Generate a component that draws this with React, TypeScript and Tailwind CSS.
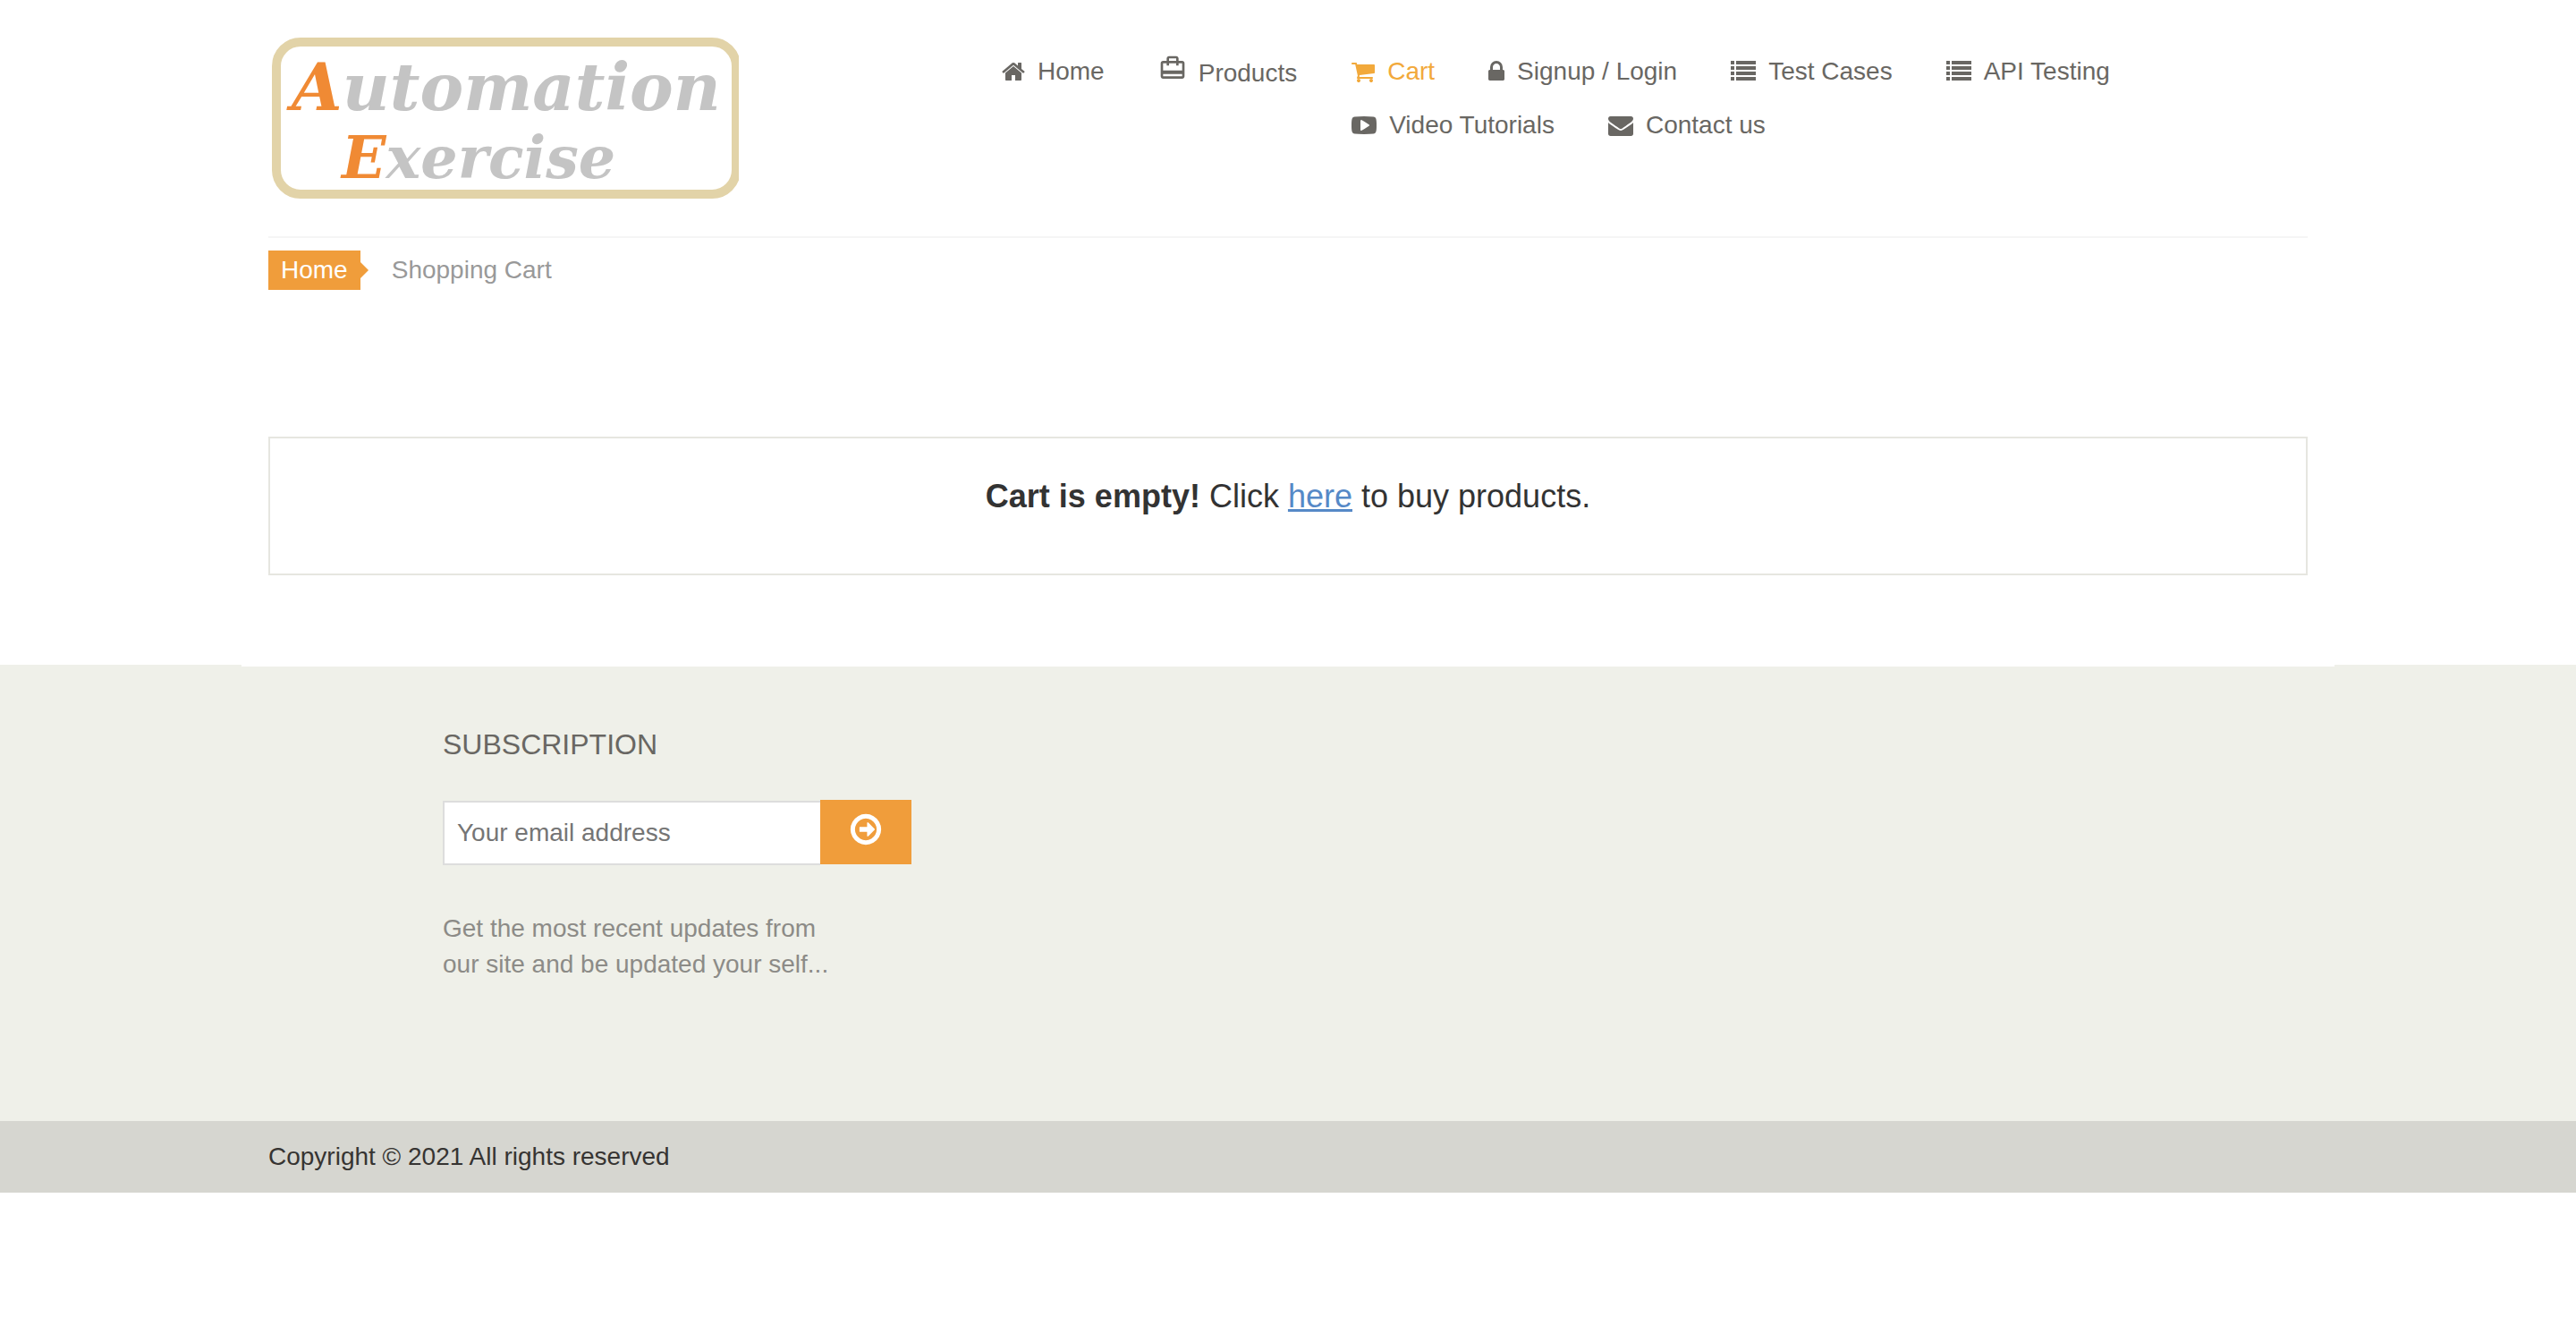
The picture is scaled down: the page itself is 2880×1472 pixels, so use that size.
import type { ReactNode } from "react";

function FaIcon({ d, left = 0, width = 1792, className }: { d: string; left?: number; width?: number; className: string }) {
  return (
    <svg viewBox={`${left} 0 ${width} 1792`} fill="currentColor" aria-hidden="true" className={className}>
      <path d={d} />
    </svg>
  );
}

const HOME =
  "M1472 992v480q0 26-19 45t-45 19h-384v-384h-256v384h-384q-26 0-45-19t-19-45v-480q0-1 .5-3t.5-3l575-474 575 474q1 2 1 6zm223-69l-62 74q-8 9-21 11h-3q-13 0-21-7l-692-577-692 577q-12 8-24 7-13-2-21-11l-62-74q-8-10-7-23.5t11-21.5l719-599q32-26 76-26t76 26l244 204v-195q0-14 9-23t23-9h192q14 0 23 9t9 23v408l219 182q10 8 11 21.5t-7 23.5z";
const CART =
  "M704 1536q0 52-38 90t-90 38-90-38-38-90 38-90 90-38 90 38 38 90zm896 0q0 52-38 90t-90 38-90-38-38-90 38-90 90-38 90 38 38 90zm128-1088v512q0 24-16.5 42.5t-40.5 21.5l-1044 122q13 60 13 70 0 16-24 64h920q26 0 45 19t19 45-19 45-45 19h-1024q-26 0-45-19t-19-45q0-11 8-31.5t16-36 21.5-40 15.5-29.5l-177-823h-204q-26 0-45-19t-19-45 19-45 45-19h256q16 0 28.5 6.5t19.5 15.5 13 24.5 8 26 5.5 29.5 4.5 26h1201q26 0 45 19t19 45z";
const LOCK =
  "M640 768h512v-192q0-106-75-181t-181-75-181 75-75 181v192zm832 96v576q0 40-28 68t-68 28h-960q-40 0-68-28t-28-68v-576q0-40 28-68t68-28h32v-192q0-184 132-316t316-132 316 132 132 316v192h32q40 0 68 28t28 68z";
const LIST =
  "M0 128h256v256H0zM384 128h1408v256H384zM0 512h256v256H0zM384 512h1408v256H384zM0 896h256v256H0zM384 896h1408v256H384zM0 1280h256v256H0zM384 1280h1408v256H384z";
const PLAY =
  "M1280 896q0-37-30-54l-512-320q-31-20-65-2-33 18-33 56v640q0 38 33 56 16 8 31 8 20 0 34-10l512-320q30-17 30-54zm512 0q0 96-1 150t-8.5 136.5-22.5 147.5q-16 73-69 123t-124 58q-222 25-671 25t-671-25q-71-8-124.5-58t-69.5-123q-14-65-21.5-147.5t-8.5-136.5-1-150 1-150 8.5-136.5 22.5-147.5q16-73 69-123t124-58q222-25 671-25t671 25q71 8 124.5 58t69.5 123q14 65 21.5 147.5t8.5 136.5 1 150z";
const ENVELOPE =
  "M1792 710v794q0 66-47 113t-113 47h-1472q-66 0-113-47t-47-113v-794q44 49 101 87 362 246 497 345 57 42 92.5 65.5t94.5 48 110 24.5h2q51 0 110-24.5t94.5-48 92.5-65.5q170-123 498-345 57-39 100-87zm0-294q0 79-49 151t-122 123q-376 261-468 325-10 7-42.5 31t-54 38.5-52 32.5-57.5 27-50 9h-2q-23 0-50-9t-57.5-27-52-32.5-54-38.5-42.5-31q-91-64-262-182.5t-205-142.5q-62-42-117-115.5t-55-136.5q0-78 41.5-130t118.5-52h1472q65 0 112.5 47t47.5 113z";
const ARROW =
  "M1344 896q0 14-9 23l-320 320q-9 9-23 9-13 0-22.5-9.5t-9.5-22.5v-192h-352q-13 0-22.5-9.5t-9.5-22.5v-192q0-13 9.5-22.5t22.5-9.5h352v-192q0-14 9-23t23-9q12 0 24 10l319 319q9 9 9 23zm96 0q0-148-73-273t-198-198-273-73-273 73-198 198-73 273 73 273 198 198 273 73 273-73 198-198 73-273zm224 0q0 209-103 385.5t-279.5 279.5-385.5 103-385.5-103-279.5-279.5-103-385.5 103-385.5 279.5-279.5 385.5-103 385.5 103 279.5 279.5 103 385.5z";

function Logo() {
  return (
    <svg viewBox="0 0 526 180" role="img" aria-label="Automation Exercise" className="h-[180px] w-[526px]">
      <rect x="9" y="5" width="514" height="170" rx="27" fill="none" stroke="#e2d3a8" strokeWidth="10" />
      <g fontFamily="DejaVu Serif, serif" fontStyle="italic" fontWeight="700" fill="#c4c4c4">
        <text x="26" y="81" fontSize="73">
          <tspan fill="#f08a34">A</tspan>utomation
        </text>
        <text x="82" y="157" fontSize="65">
          <tspan fill="#f08a34">E</tspan>xercise
        </text>
      </g>
    </svg>
  );
}

function NavItem({ icon, active = false, children }: { icon: ReactNode; active?: boolean; children: string }) {
  return (
    <li>
      <a href="#" className={active ? "flex items-center text-[#f2a93b]" : "flex items-center text-[#696763]"}>
        {icon}
        <span>{children}</span>
      </a>
    </li>
  );
}

const wide = "mr-[14px] size-7";

export default function App() {
  return (
    <div className="min-h-screen bg-white font-['Liberation_Sans',Arial,sans-serif] text-[28px] leading-10 text-[#363432]">
      <header className="mx-auto flex w-full max-w-[2340px] items-start px-[30px] pt-[42px] pb-[42px]">
        <a href="#" className="mr-[294px] shrink-0">
          <Logo />
        </a>
        <nav className="flex items-start gap-[61px] pt-[18px] leading-10">
          <ul className="flex gap-[60px]">
            <NavItem icon={<FaIcon d={HOME} left={64} width={1664} className="mr-[14px] h-7 w-[26px]" />}>Home</NavItem>
            <li>
              <a href="#" className="flex items-start text-[#696763]">
                <svg viewBox="0 0 24 24" fill="currentColor" aria-hidden="true" className="mr-[13px] size-8">
                  <path d="M20 6h-3V4c0-1.11-.89-2-2-2H9c-1.11 0-2 .89-2 2v2H4c-1.11 0-2 .89-2 2v11c0 1.11.89 2 2 2h16c1.11 0 2-.89 2-2V8c0-1.11-.89-2-2-2zM9 4h6v2H9V4zm11 15H4v-2h16v2zm0-5H4V8h3v2h2V8h6v2h2V8h3v6z" />
                </svg>
                <span className="pt-[2px]">Products</span>
              </a>
            </li>
          </ul>
          <ul className="flex max-w-[900px] flex-wrap gap-x-[60px] gap-y-5">
            <NavItem active icon={<FaIcon d={CART} left={64} width={1664} className="mr-[14px] h-7 w-[26px]" />}>Cart</NavItem>
            <NavItem icon={<FaIcon d={LOCK} left={320} width={1152} className="mr-[14px] h-7 w-[18px]" />}>Signup / Login</NavItem>
            <NavItem icon={<FaIcon d={LIST} className={wide} />}>Test Cases</NavItem>
            <NavItem icon={<FaIcon d={LIST} className={wide} />}>API Testing</NavItem>
            <NavItem icon={<FaIcon d={PLAY} className={wide} />}>Video Tutorials</NavItem>
            <NavItem icon={<FaIcon d={ENVELOPE} className={wide} />}>Contact us</NavItem>
          </ul>
        </nav>
      </header>

      <main className="mx-auto w-full max-w-[2340px] px-[30px] pb-[100px]">
        <ol className="flex items-center border-t-2 border-[#f5f5f5] pt-[14px]">
          <li className="flex items-center">
            <a href="#" className="bg-[#f09d3b] px-[14px] py-[2px] text-white">
              Home
            </a>
            <svg viewBox="0 0 9 18" aria-hidden="true" className="h-[18px] w-[9px]" fill="#f09d3b">
              <path d="M0 0l9 9-9 9z" />
            </svg>
          </li>
          <li className="pl-[26px] text-[#999999]">Shopping Cart</li>
        </ol>
        <section className="mt-[164px] border-2 border-[#e6e6e0] pt-[40px] pb-[61px] text-center text-[36px] leading-[50px] text-[#333333]">
          <p>
            <b>Cart is empty!</b> Click{" "}
            <a href="#" className="text-[#5689c7] underline decoration-3">
              here
            </a>{" "}
            to buy products.
          </p>
        </section>
      </main>

      <footer>
        <div className="bg-[#eff0e9]">
          <div className="mx-auto w-full max-w-[2340px] border-t-2 border-white px-[225px] pt-[67px] pb-[155px]">
            <h2 className="text-[32px] leading-10 text-[#696763]">SUBSCRIPTION</h2>
            <form className="mt-[42px] flex items-start" onSubmit={(e) => e.preventDefault()}>
              <input
                type="email"
                aria-label="Your email address"
                placeholder="Your email address"
                className="mt-px h-[72px] w-[422px] border-2 border-r-0 border-[#dddddd] bg-white px-[14px] text-[28px] outline-none placeholder:text-[#757575]"
              />
              <button type="submit" aria-label="Subscribe" className="flex h-[72px] w-[102px] justify-center bg-[#f09d3b] pt-[13px] text-white">
                <FaIcon d={ARROW} className="size-10" />
              </button>
            </form>
            <p className="mt-[51px] text-[#8c8b87]">
              Get the most recent updates from
              <br />
              our site and be updated your self...
            </p>
          </div>
        </div>
        <div className="bg-[#d6d6d0]">
          <p className="mx-auto w-full max-w-[2340px] px-[30px] py-5">Copyright © 2021 All rights reserved</p>
        </div>
      </footer>
    </div>
  );
}
